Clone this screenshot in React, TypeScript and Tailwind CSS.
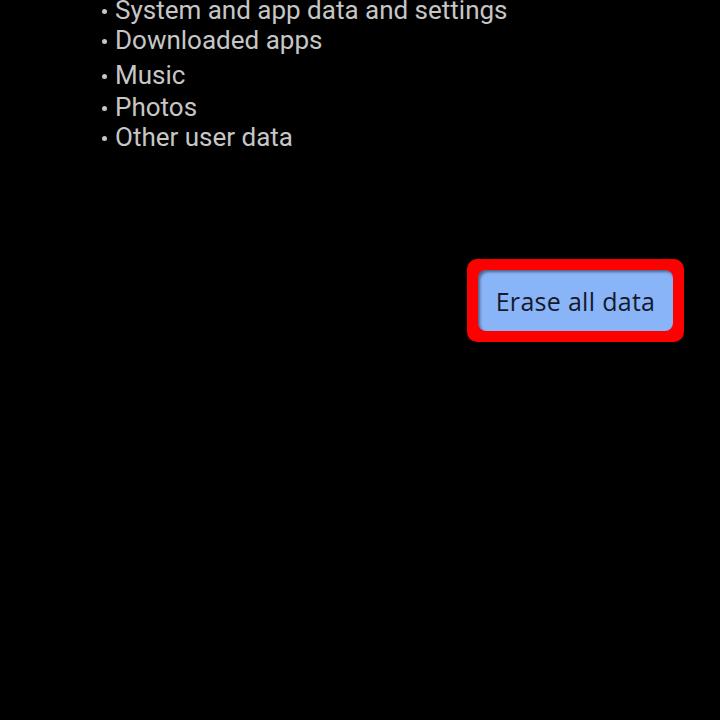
const items: { label: string; gap?: string }[] = [
  { label: "System and app data and settings" },
  { label: "Downloaded apps" },
  { label: "Music", gap: "mt-[5px]" },
  { label: "Photos", gap: "mt-[2px]" },
  { label: "Other user data" },
];

export default function App() {
  return (
    <div className="w-[720px] h-[720px] bg-black overflow-hidden font-['Roboto',sans-serif]">
      <ul className="-mt-[5px] pl-[102px] text-[26px] leading-[30px] text-[#c6c6c6]">
        {items.map((it) => (
          <li key={it.label} className={`flex items-center ${it.gap ?? ""}`}>
            <span className="w-[5px] h-[5px] rounded-full bg-[#c6c6c6] mr-[8px] mt-[2px]" />
            {it.label}
          </li>
        ))}
      </ul>

      <div className="flex justify-end pr-[36px] mt-[107px]">
        {/* highlight frame around the primary action */}
        <div className="rounded-[10px] bg-[#ff0000] p-[11px]">
          <button className="w-[195px] h-[61px] pt-[2px] rounded-[8px] bg-[#8ab4f8] text-[#141a2c] text-[25px] tracking-[0.3px] font-medium shadow-[inset_2px_2px_3px_rgba(0,0,0,0.45)] font-['Open_Sans',sans-serif]">
            Erase all data
          </button>
        </div>
      </div>
    </div>
  );
}
